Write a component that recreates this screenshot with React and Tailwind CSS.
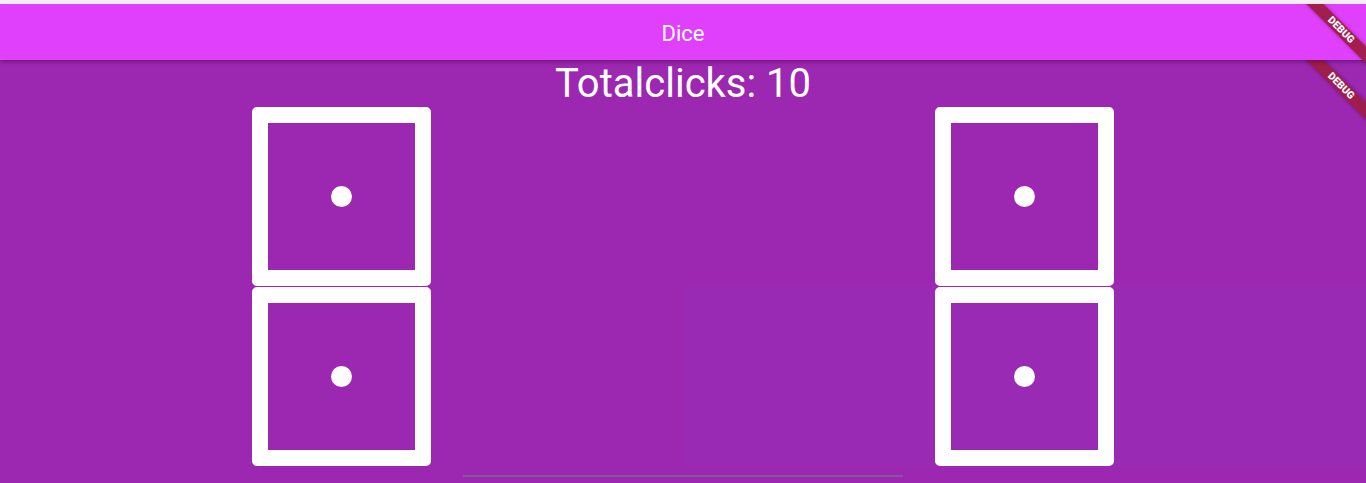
import React from 'react';

const Die = () => (
    <div className="w-[179px] h-[179px] border-[16px] border-white rounded-[5px] flex items-center justify-center">
        <div className="w-[21px] h-[21px] rounded-full bg-white" />
    </div>
);

// flutter style debug ribbon in the corner
const DebugBanner = () => (
    <div className="absolute top-0 right-0 w-[70px] h-[70px] overflow-hidden pointer-events-none">
        <div className="absolute left-[-10px] top-[20px] w-[110px] h-[12px] rotate-45 bg-[#9e1c44]/[0.95] shadow-[0_0_4px_rgba(0,0,0,0.35)] flex items-center justify-center">
            <span className="text-white text-[10.2px] font-black leading-none">DEBUG</span>
        </div>
    </div>
);

const App = () => {
    return (
        <div className="w-[1366px] h-[483px] overflow-hidden flex flex-col bg-[#f1f1f1] font-['Roboto',sans-serif]">
            <div className="h-[4px]" />
            {/* App bar */}
            <div className="relative z-10 h-[56px] bg-[#e040fb] flex items-center justify-center pt-[2px] shadow-[0_2px_4px_rgba(0,0,0,0.3)]">
                <span className="text-white text-[22px]">Dice</span>
                <DebugBanner />
            </div>

            {/* Body */}
            <div className="relative flex-1 bg-[#9c27b0] flex flex-col items-center">
                <DebugBanner />
                <div className="h-[47px] flex items-center justify-center text-white text-[40px] leading-none">
                    Totalclicks: 10
                </div>
                <div className="w-full grid grid-cols-2">
                    <div className="flex justify-center">
                        <Die />
                    </div>
                    <div className="flex justify-center">
                        <Die />
                    </div>
                    <div className="flex justify-center pt-px">
                        <Die />
                    </div>
                    <div className="flex justify-center pt-px bg-[#982ab3]">
                        <Die />
                    </div>
                </div>
                <div className="mt-[9px] w-[440px] h-[2px] bg-[#7e5a9c]" />
            </div>
        </div>
    );
};

export default App;
